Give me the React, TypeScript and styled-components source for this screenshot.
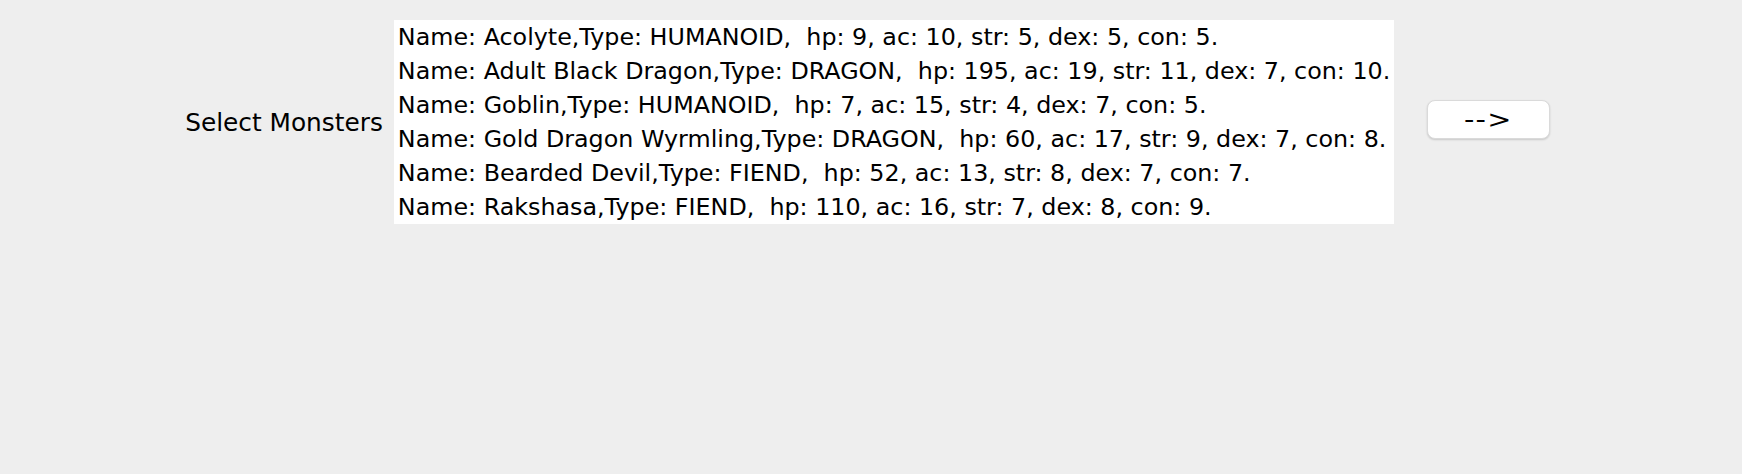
import React from "react";
import styled, { createGlobalStyle } from "styled-components";

const Global = createGlobalStyle`
  html, body { margin: 0; padding: 0; background: #eeeeee; }
  body { font-family: "DejaVu Sans", "Liberation Sans", sans-serif; }
`;

const Page = styled.div`
  display: flex;
  justify-content: center;
  align-items: center;
  padding-top: 20px;
  padding-right: 7px;
`;

const Label = styled.div`
  font-size: 24.8px;
  color: #000;
  margin-right: 11px;
  white-space: nowrap;
`;

const List = styled.ul`
  list-style: none;
  margin: 0;
  padding: 0;
  width: 1000px;
  background: #ffffff;
`;

const Row = styled.li`
  height: 34px;
  line-height: 34px;
  padding-left: 4px;
  font-size: 23.8px;
  color: #000;
  white-space: pre;
`;

const Button = styled.button`
  margin-left: 33px;
  margin-top: -5px;
  width: 123px;
  height: 39px;
  background: #ffffff;
  border: 1px solid #dadada;
  border-radius: 8px;
  box-shadow: 0 1px 2px rgba(0, 0, 0, 0.16);
  font-family: "DejaVu Sans", sans-serif;
  font-size: 24px;
  padding: 0;
  color: #000;
`;

const ArrowText = styled.span`
  display: inline-block;
  letter-spacing: 1px;
  transform: scaleX(1.2);
`;

const monsters = [
  "Name: Acolyte,Type: HUMANOID,  hp: 9, ac: 10, str: 5, dex: 5, con: 5.",
  "Name: Adult Black Dragon,Type: DRAGON,  hp: 195, ac: 19, str: 11, dex: 7, con: 10.",
  "Name: Goblin,Type: HUMANOID,  hp: 7, ac: 15, str: 4, dex: 7, con: 5.",
  "Name: Gold Dragon Wyrmling,Type: DRAGON,  hp: 60, ac: 17, str: 9, dex: 7, con: 8.",
  "Name: Bearded Devil,Type: FIEND,  hp: 52, ac: 13, str: 8, dex: 7, con: 7.",
  "Name: Rakshasa,Type: FIEND,  hp: 110, ac: 16, str: 7, dex: 8, con: 9.",
];

export default function App() {
  return (
    <>
      <Global />
      <Page>
        <Label>Select Monsters</Label>
        <List>
          {monsters.map((m) => (
            <Row key={m}>{m}</Row>
          ))}
        </List>
        <Button>
          <ArrowText>--&gt;</ArrowText>
        </Button>
      </Page>
    </>
  );
}
